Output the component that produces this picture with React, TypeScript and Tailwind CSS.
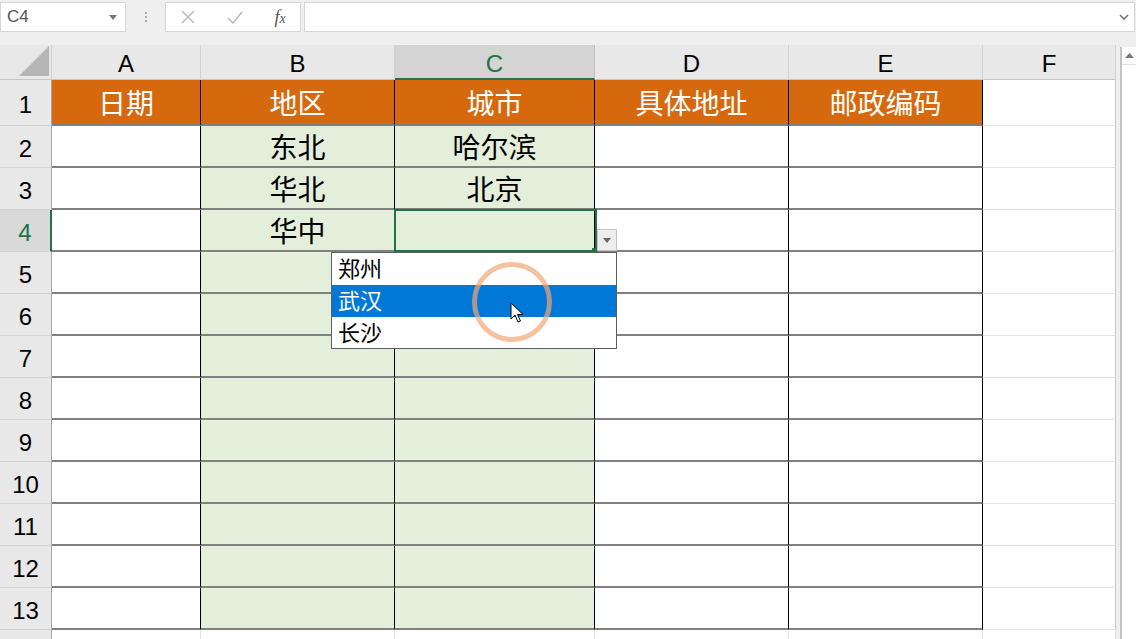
import React from 'react';

const COLS = ['A', 'B', 'C', 'D', 'E', 'F'];
const WIDTHS = ['w-[149px]', 'w-[194px]', 'w-[200px]', 'w-[194px]', 'w-[194px]', 'w-[133px]'];

const DATA: string[][] = [
  ['日期', '地区', '城市', '具体地址', '邮政编码'],
  ['', '东北', '哈尔滨', '', ''],
  ['', '华北', '北京', '', ''],
  ['', '华中', '', '', ''],
];

function Cell({ row, col, text }: { row: number; col: number; text: string }) {
  const w = WIDTHS[col];
  if (row === 14) {
    return <div className={`${w} h-full border-r border-[#e1e1e1] bg-white`} />;
  }
  if (col === 5) {
    return <div className={`${w} h-full border-r border-[#c6c6c6] border-b border-b-[#e3e3e3] bg-white`} />;
  }
  let bg = 'bg-white text-black';
  if (row === 1) bg = 'bg-[#d6690d] text-white';
  else if (col === 1 || col === 2) bg = 'bg-[#e3eedb] text-black';
  return (
    <div
      className={`${w} h-full flex items-center justify-center pt-[5px] border-r border-black border-b-2 border-b-[#808080] text-[28px] leading-none ${bg}`}
    >
      {text}
    </div>
  );
}

function Row({ n }: { n: number }) {
  const h = n === 1 ? 'h-[46px]' : 'h-[42px]';
  const sel = n === 4;
  const cells = DATA[n - 1] ?? ['', '', '', '', ''];
  return (
    <div className={`flex ${h}`}>
      <div
        className={`w-[52px] h-full flex items-center justify-center pt-[4px] text-[24px] leading-none border-b border-[#d4d4d4] ${
          sel ? 'bg-[#d9d9d9] text-[#217346] border-r-2 border-r-[#217346]' : 'bg-[#e8e8e8] text-black border-r border-r-[#a6a6a6]'
        }`}
      >
        {n}
      </div>
      {COLS.map((c, i) => (
        <Cell key={c} row={n} col={i} text={cells[i] ?? ''} />
      ))}
    </div>
  );
}

function Toolbar() {
  return (
    <div className="h-[45px] bg-[#efefef] flex items-start pt-[2px]">
      <div className="w-[126px] h-[30px] bg-white border border-[#d6d6d6] flex items-center justify-between pl-[6px] pr-[8px]">
        <span className="text-[17px] text-[#555]">C4</span>
        <svg width="8" height="5" viewBox="0 0 8 5"><path d="M0 0h8L4 5z" fill="#777" /></svg>
      </div>
      <div className="w-[39px] h-[30px] flex flex-col items-center justify-center gap-[2px]">
        <div className="w-[2px] h-[2px] bg-[#aaa]" />
        <div className="w-[2px] h-[2px] bg-[#aaa]" />
        <div className="w-[2px] h-[2px] bg-[#aaa]" />
      </div>
      <div className="w-[136px] h-[30px] bg-white border border-[#d6d6d6] flex items-center">
        <div className="w-[44px] flex justify-center">
          <svg width="14" height="14" viewBox="0 0 14 14"><path d="M1 1L13 13M13 1L1 13" stroke="#bdbdbd" strokeWidth="1.5" /></svg>
        </div>
        <div className="w-[50px] flex justify-center">
          <svg width="16" height="13" viewBox="0 0 16 13"><path d="M1 7L6 12L15 1" stroke="#bdbdbd" strokeWidth="1.6" fill="none" /></svg>
        </div>
        <div className="flex-1 flex justify-center">
          <span className="font-['Liberation_Serif',serif] italic text-[18px] text-[#555]">
            f<span className="text-[14px]">x</span>
          </span>
        </div>
      </div>
      <div className="ml-[3px] w-[831px] h-[30px] bg-white border border-[#d6d6d6] flex items-center justify-end pr-[5px]">
        <svg width="10" height="7" viewBox="0 0 10 7"><path d="M1 1L5 5L9 1" stroke="#777" strokeWidth="1.6" fill="none" /></svg>
      </div>
    </div>
  );
}

export default function App() {
  return (
    <div className="relative w-[1136px] h-[639px] overflow-hidden bg-[#efefef] font-['Liberation_Sans','Noto_Sans_CJK_SC',sans-serif]">
      <Toolbar />
      <div className="flex">
        <div className="w-[1116px] flex flex-col">
          {/* column headers */}
          <div className="flex h-[35px] bg-[#e8e8e8]">
            <div className="w-[52px] h-full flex items-end justify-end pr-[2px] pb-[3px] border-r border-[#cfcfcf] border-b border-b-[#c6c6c6]">
              <svg width="30" height="30" viewBox="0 0 30 30"><path d="M30 0V30H0z" fill="#b5b5b5" /></svg>
            </div>
            {COLS.map((c, i) => (
              <div
                key={c}
                className={`${WIDTHS[i]} h-full flex items-center justify-center text-[24px] leading-none pt-[4px] ${
                  c === 'C'
                    ? 'bg-[#d4d4d4] text-[#217346] border-b-2 border-[#217346] border-r border-r-[#bdbdbd]'
                    : 'text-black border-r border-[#d2d2d2] border-b border-b-[#c6c6c6]'
                }`}
              >
                {c}
              </div>
            ))}
          </div>
          {Array.from({ length: 14 }, (_, i) => (
            <Row key={i} n={i + 1} />
          ))}
        </div>
        <div className="w-[4px]" />
        <div className="w-[16px] mt-[2px] bg-white border-l-2 border-[#c2c2c2] flex flex-col">
          <div className="h-[18px] flex items-center justify-center border-b border-[#e2e2e2]">
            <svg width="9" height="5" viewBox="0 0 9 5"><path d="M0 5h9L4.5 0z" fill="#777" /></svg>
          </div>
        </div>
      </div>

      {/* selected cell C4 */}
      <div className="absolute left-[394px] top-[209px] w-[203px] h-[43px] border-2 border-[#217346]" />
      <div className="absolute left-[592px] top-[248px] w-[6px] h-[5px] bg-[#217346]" />

      {/* validation dropdown button */}
      <div className="absolute left-[597px] top-[229px] w-[20px] h-[22px] bg-[#ededed] border border-[#c4c4c4] flex items-center justify-center">
        <svg width="8" height="5" viewBox="0 0 8 5"><path d="M0 0h8L4 5z" fill="#666" /></svg>
      </div>

      {/* dropdown list */}
      <div className="absolute left-[331px] top-[252px] w-[286px] h-[97px] bg-white border border-[#5f5f5f] text-[22px] leading-none">
        <div className="h-[32px] flex items-center pl-[6px] pt-[2px] text-black">郑州</div>
        <div className="h-[32px] flex items-center pl-[6px] pt-[2px] bg-[#0078d7] text-white">武汉</div>
        <div className="h-[32px] flex items-center pl-[6px] pt-[2px] text-black">长沙</div>
      </div>

      {/* click highlight */}
      <div className="absolute left-[472px] top-[262px] w-[80px] h-[80px] rounded-full border-[5px] border-[#f2a775]/70" />
      <svg className="absolute left-[510px] top-[302px]" width="14" height="22" viewBox="0 0 14 22">
        <path d="M1 1V17L5 13L8 20L10.5 19L7.5 12.5H13z" fill="white" stroke="black" strokeWidth="1" strokeLinejoin="round" />
      </svg>
    </div>
  );
}
